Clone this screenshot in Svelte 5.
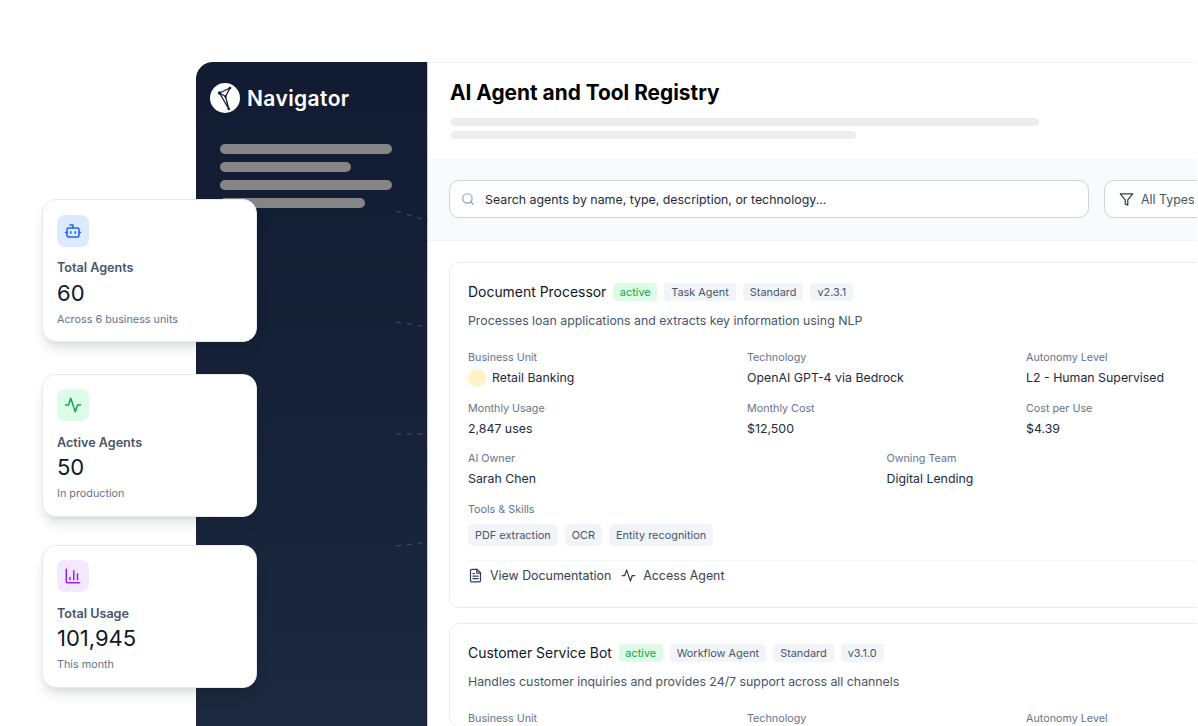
<script>
  const stats = [
    { label: 'Total Agents', value: '60', note: 'Across 6 business units', tone: 'blue', icon: 'bot' },
    { label: 'Active Agents', value: '50', note: 'In production', tone: 'green', icon: 'pulse' },
    { label: 'Total Usage', value: '101,945', note: 'This month', tone: 'purple', icon: 'chart' }
  ];
  const connectors = [
    'M396 211 L428 221',
    'M396 322 L428 327',
    'M396 434 L428 434',
    'M396 546 L428 542'
  ];
</script>

<div class="page">
  <div class="frame">
    <aside class="sidebar">
      <div class="brand">
        <svg class="logo" viewBox="0 0 30 30" aria-hidden="true">
          <circle cx="15" cy="15" r="15" fill="#fff" />
          <path d="M9.5 10 L20 5 L15.5 13.5 L18.8 26 Z M9.5 10 L15.5 13.5" fill="none" stroke="#131e34" stroke-width="1.3" stroke-linejoin="round" />
          <circle cx="9.5" cy="10" r="1.7" fill="#131e34" />
          <circle cx="20" cy="5" r="1.3" fill="#131e34" />
          <circle cx="15.5" cy="13.5" r="1.2" fill="#131e34" />
          <circle cx="18.8" cy="26" r="1.3" fill="#131e34" />
        </svg>
        <span>Navigator</span>
      </div>
      <div class="nav-lines">
        <i class="w172"></i>
        <i class="w131"></i>
        <i class="w172"></i>
        <i class="w145"></i>
      </div>
    </aside>

    <main class="main">
      <header class="head">
        <h1>AI Agent and Tool Registry</h1>
        <i class="ph long"></i>
        <i class="ph short"></i>
      </header>

      <section class="filters">
        <div class="search">
          <svg viewBox="0 0 24 24" class="ic search-ic" aria-hidden="true"><circle cx="11" cy="11" r="8" /><path d="m21 21-4.3-4.3" /></svg>
          <span>Search agents by name, type, description, or technology...</span>
        </div>
        <div class="select">
          <svg viewBox="0 0 24 24" class="ic filter-ic" aria-hidden="true"><path d="M22 3H2l8 9.46V19l4 2v-8.54L22 3z" /></svg>
          <span>All Types</span>
        </div>
      </section>

      <section class="list">
        <article class="card">
          <div class="title-row">
            <h2>Document Processor</h2>
            <span class="tag ok">active</span>
            <span class="tag">Task Agent</span>
            <span class="tag">Standard</span>
            <span class="tag">v2.3.1</span>
          </div>
          <p class="desc">Processes loan applications and extracts key information using NLP</p>
          <div class="grid three">
            <div><label>Business Unit</label><div class="val"><i class="dot"></i>Retail Banking</div></div>
            <div><label>Technology</label><div class="val">OpenAI GPT-4 via Bedrock</div></div>
            <div><label>Autonomy Level</label><div class="val">L2 - Human Supervised</div></div>
          </div>
          <div class="grid three">
            <div><label>Monthly Usage</label><div class="val">2,847 uses</div></div>
            <div><label>Monthly Cost</label><div class="val">$12,500</div></div>
            <div><label>Cost per Use</label><div class="val">$4.39</div></div>
          </div>
          <div class="grid two">
            <div><label>AI Owner</label><div class="val">Sarah Chen</div></div>
            <div><label>Owning Team</label><div class="val">Digital Lending</div></div>
          </div>
          <div class="tools">
            <label>Tools &amp; Skills</label>
            <div class="chips">
              <span class="chip">PDF extraction</span>
              <span class="chip">OCR</span>
              <span class="chip">Entity recognition</span>
            </div>
          </div>
          <div class="actions">
            <span class="act">
              <svg viewBox="0 0 24 24" class="ic" aria-hidden="true"><path d="M14.5 2H6a2 2 0 0 0-2 2v16a2 2 0 0 0 2 2h12a2 2 0 0 0 2-2V7.5L14.5 2z" /><path d="M14 2v6h6M16 13H8M16 17H8M10 9H8" /></svg>
              View Documentation
            </span>
            <span class="act">
              <svg viewBox="0 0 24 24" class="ic" aria-hidden="true"><path d="M22 12h-4l-3 9L9 3l-3 9H2" /></svg>
              Access Agent
            </span>
          </div>
        </article>

        <article class="card">
          <div class="title-row">
            <h2>Customer Service Bot</h2>
            <span class="tag ok">active</span>
            <span class="tag">Workflow Agent</span>
            <span class="tag">Standard</span>
            <span class="tag">v3.1.0</span>
          </div>
          <p class="desc">Handles customer inquiries and provides 24/7 support across all channels</p>
          <div class="grid three">
            <div><label>Business Unit</label></div>
            <div><label>Technology</label></div>
            <div><label>Autonomy Level</label></div>
          </div>
        </article>
      </section>
    </main>
  </div>

  <svg class="connectors" viewBox="0 0 1198 726" aria-hidden="true">
    {#each connectors as d}
      <path {d} />
    {/each}
  </svg>

  <div class="stats">
    {#each stats as s}
      <div class="stat">
        <div class="badge {s.tone}">
          {#if s.icon === 'bot'}
            <svg viewBox="0 0 24 24" aria-hidden="true"><path d="M12 8V4H8" /><rect x="4" y="8" width="16" height="12" rx="2" /><path d="M2 14h2M20 14h2M15 13v2M9 13v2" /></svg>
          {:else if s.icon === 'pulse'}
            <svg viewBox="0 0 24 24" aria-hidden="true"><path d="M22 12h-4l-3 9L9 3l-3 9H2" /></svg>
          {:else}
            <svg viewBox="0 0 24 24" aria-hidden="true"><path d="M3 3v16a2 2 0 0 0 2 2h16M8 17v-3M13 17V5M18 17V9" /></svg>
          {/if}
        </div>
        <div class="s-label">{s.label}</div>
        <div class="s-value">{s.value}</div>
        <div class="s-note">{s.note}</div>
      </div>
    {/each}
  </div>
</div>

<style>
  :global(body) { margin: 0; background: #fff; }
  .page {
    position: relative;
    width: 1198px;
    height: 726px;
    overflow: hidden;
    background: #fff;
    font-family: Inter, "Liberation Sans", sans-serif;
    padding: 62px 0 0 196px;
    box-sizing: border-box;
  }
  .frame { display: flex; width: 1001px; height: 800px; overflow: hidden; }
  .sidebar {
    width: 231px;
    flex: none;
    background: linear-gradient(180deg, #111b31 0%, #1e2b40 100%);
    border-top-left-radius: 17px;
    padding: 21px 14px 0;
    box-sizing: border-box;
  }
  .brand { display: flex; align-items: center; gap: 7px; color: #fff; font-size: 21px; font-weight: 600; letter-spacing: 0.4px; }
  .logo { width: 30px; height: 30px; flex: none; }
  .nav-lines { display: flex; flex-direction: column; gap: 8px; margin: 31px 0 0 10px; }
  .nav-lines i { display: block; height: 10px; border-radius: 5px; background: #858585; }
  .w172 { width: 172px; }
  .w131 { width: 131px; }
  .w145 { width: 145px; }

  .main { flex: 1; min-width: 0; background: #fff; border-top: 1px solid #f1f3f6; border-left: 1px solid #c3cddc; }
  .head { height: 95px; padding: 16px 0 0 22px; box-sizing: border-box; }
  h1 { margin: 0 0 12px; font-size: 20.85px; line-height: 27px; font-weight: 700; color: #000; }
  .ph { display: block; height: 8px; border-radius: 4px; background: #ededed; margin-left: 1px; }
  .ph.long { width: 588px; margin-bottom: 5px; }
  .ph.short { width: 405px; }

  .ic { fill: none; stroke: currentColor; stroke-width: 2; stroke-linecap: round; stroke-linejoin: round; flex: none; }

  .filters {
    display: flex;
    gap: 15px;
    height: 83px;
    padding: 22px 0 0 21px;
    box-sizing: border-box;
    background: #f8fafc;
    border-bottom: 1px solid #eef1f5;
  }
  .search, .select {
    display: flex;
    align-items: center;
    height: 38px;
    box-sizing: border-box;
    background: #fff;
    border: 1px solid #cbd5e1;
    border-radius: 10px;
    flex: none;
  }
  .search { width: 640px; padding-left: 11px; color: #1e293b; font-size: 12.38px; }
  .search-ic { width: 14px; height: 14px; margin-right: 10px; stroke: #8ea0b8; }
  .select { width: 140px; padding-left: 14px; color: #475569; font-size: 12.4px; }
  .filter-ic { width: 15px; height: 15px; margin-right: 7px; stroke: #334155; }

  .list { padding: 21px 0 0 21px; display: flex; flex-direction: column; gap: 15px; }
  .card {
    width: 875px;
    box-sizing: border-box;
    border: 1px solid #e8ecf2;
    border-radius: 10px;
    padding: 18px 18px 0;
    background: #fff;
    flex: none;
  }
  .card:first-child { height: 346px; }
  .title-row { display: flex; align-items: center; height: 22px; gap: 7px; }
  h2 { margin: 0; font-size: 13.95px; line-height: 22px; font-weight: 400; color: #0f172a; }
  .tag {
    height: 18px;
    line-height: 18px;
    padding: 0 7px;
    border-radius: 4px;
    background: #f1f5f9;
    color: #475569;
    font-size: 10.9px;
  }
  .tag.ok { background: #dcfce7; color: #16a34a; padding: 0 6.5px; }
  .desc { margin: 8.5px 0 0; font-size: 12.33px; line-height: 18px; color: #475569; }
  .grid { display: grid; margin-top: 10.5px; }
  .three { grid-template-columns: repeat(3, 279px); }
  .two { grid-template-columns: repeat(2, 418.5px); }
  .desc + .grid { margin-top: 20.5px; }
  label { display: block; font-size: 10.75px; line-height: 15px; color: #64748b; }
  .val { display: flex; align-items: center; height: 25px; font-size: 12.35px; color: #1e293b; }
  .dot { width: 18px; height: 18px; border-radius: 50%; background: #fef3c7; margin-right: 6px; }
  .tools { margin-top: 11px; }
  .chips { display: flex; gap: 7px; margin-top: 7px; }
  .chip {
    height: 22px;
    line-height: 22px;
    padding: 0 7px;
    border-radius: 5px;
    background: #f1f5f9;
    color: #475569;
    font-size: 10.9px;
  }
  .actions { display: flex; gap: 10px; margin-top: 14px; border-top: 1px solid #f4f6f9; padding-top: 6.5px; }
  .act { display: flex; align-items: center; gap: 7px; font-size: 12.4px; line-height: 16px; color: #334155; }
  .act .ic { width: 15px; height: 15px; }

  .connectors { position: absolute; inset: 0; width: 1198px; height: 726px; pointer-events: none; }
  .connectors path { fill: none; stroke: #47526a; stroke-width: 1; stroke-dasharray: 5 6; }

  .stats { position: absolute; left: 42px; top: 199px; width: 215px; display: flex; flex-direction: column; gap: 31.5px; }
  .stat {
    height: 143px;
    box-sizing: border-box;
    padding: 14.5px 14px 0;
    background: #fff;
    border: 1px solid #e7ebf1;
    border-radius: 14px;
    box-shadow: 0 9px 14px -3px rgba(15, 23, 42, 0.12), 0 3px 6px -2px rgba(15, 23, 42, 0.08);
  }
  .stat:nth-child(3) { margin-top: -3.5px; }
  .badge { width: 32px; height: 32px; border-radius: 8px; display: flex; align-items: center; justify-content: center; }
  .badge svg { width: 18px; height: 18px; fill: none; stroke: currentColor; stroke-width: 2; stroke-linecap: round; stroke-linejoin: round; }
  .blue { background: #dbeafe; color: #2563eb; }
  .green { background: #dcfce7; color: #16a34a; }
  .purple { background: #f3e8ff; color: #a21cef; }
  .s-label { margin-top: 12.5px; font-size: 12.6px; line-height: 17px; font-weight: 600; color: #475569; }
  .s-value { margin-top: 3.5px; font-size: 22px; line-height: 27px; font-weight: 400; color: #0f172a; }
  .s-note { margin-top: 5px; font-size: 10.8px; line-height: 15px; color: #64748b; }
</style>
